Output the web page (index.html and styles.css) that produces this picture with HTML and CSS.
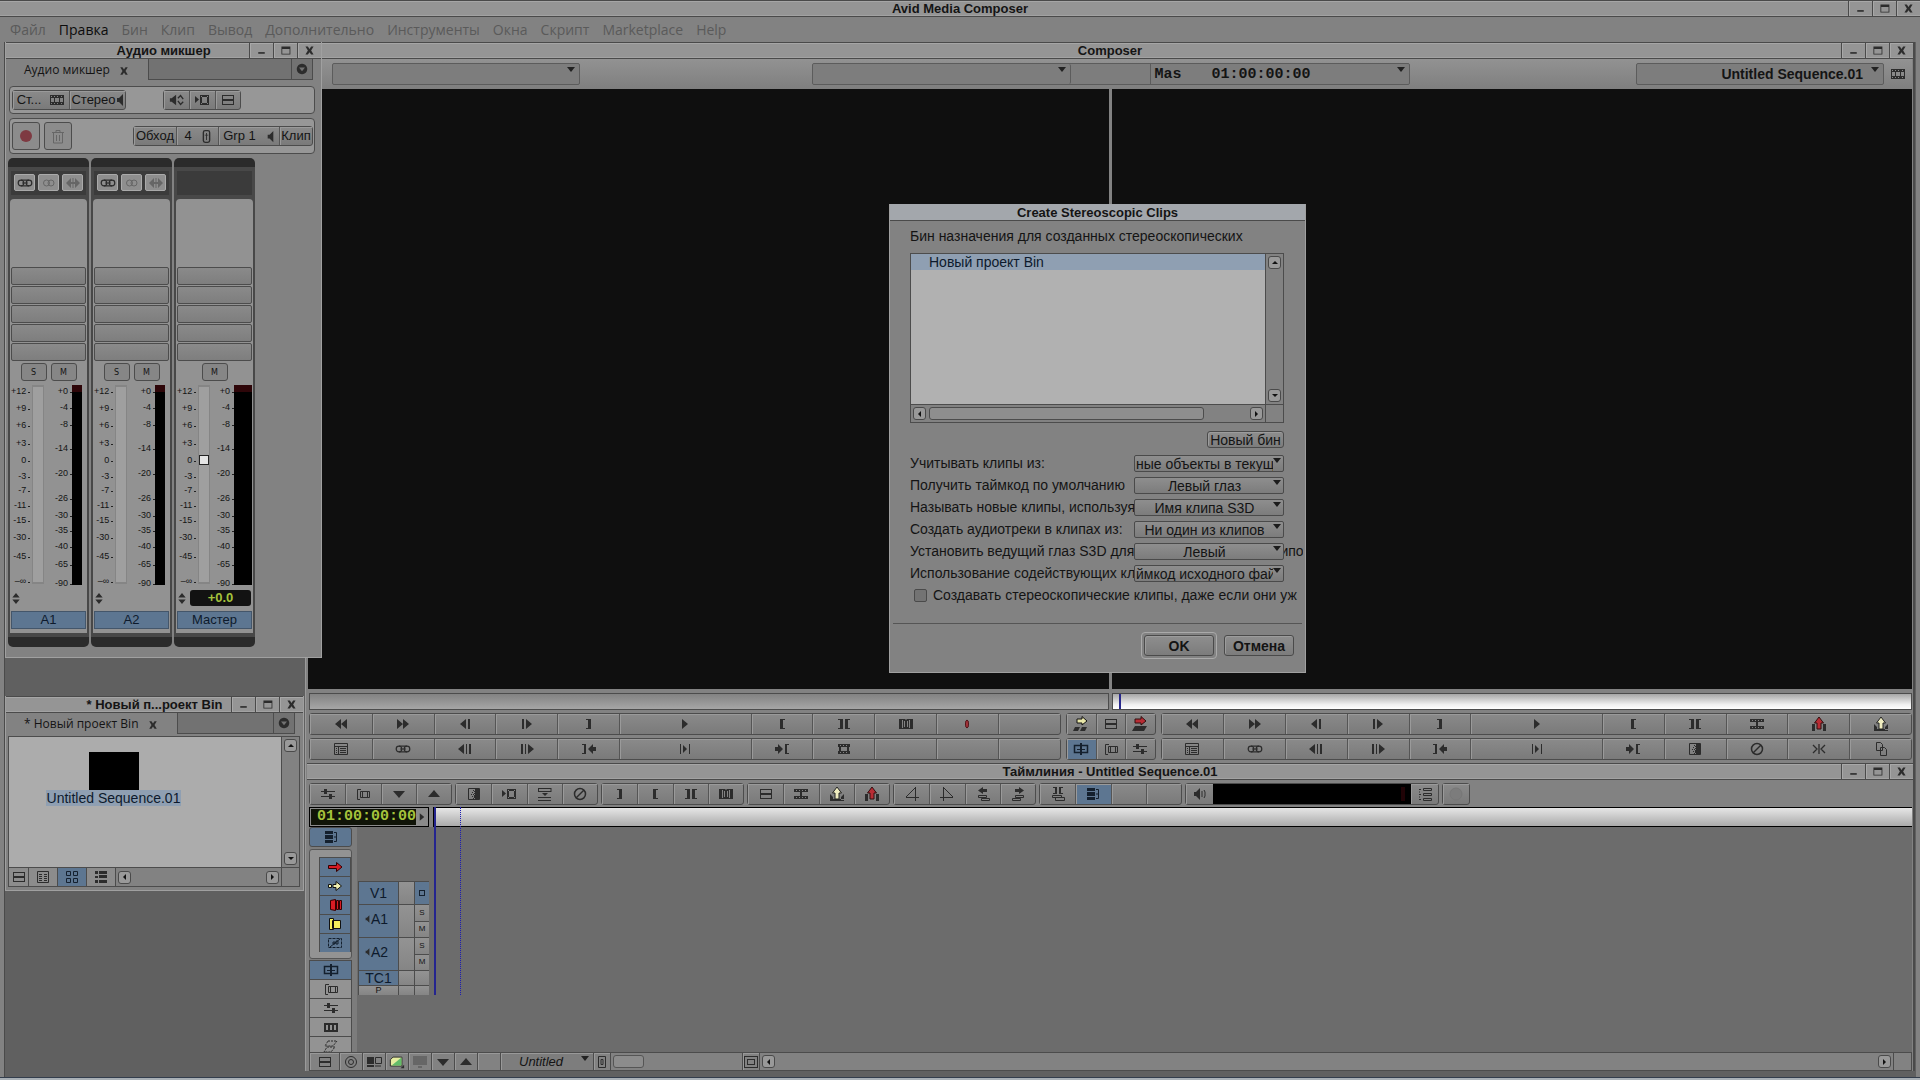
FILE: index.html
```html
<!DOCTYPE html>
<html lang="ru">
<head>
<meta charset="utf-8">
<title>Avid Media Composer</title>
<link rel="stylesheet" href="styles.css">
</head>
<body>

<svg class="sprite" aria-hidden="true">
  <symbol id="min" viewBox="0 0 16 16"><path d="M4 10h8v2H4z"/></symbol>
  <symbol id="max" viewBox="0 0 16 16"><path d="M3 3h11v10H3zM4 6v6h9V6z" fill-rule="evenodd"/></symbol>
  <symbol id="close" viewBox="0 0 16 16"><path d="M3 3h3l2 3 2-3h3L10 8l3 5h-3l-2-3-2 3H3l3-5z"/></symbol>
  <symbol id="rew" viewBox="0 0 16 16"><path d="M8 3v10L2 8zM14 3v10L8 8z"/></symbol>
  <symbol id="ff" viewBox="0 0 16 16"><path d="M2 3v10l6-5zM8 3v10l6-5z"/></symbol>
  <symbol id="back1" viewBox="0 0 16 16"><path d="M9 3v10L3 8zM11 3h2v10h-2z"/></symbol>
  <symbol id="fwd1" viewBox="0 0 16 16"><path d="M7 3v10l6-5zM3 3h2v10H3z"/></symbol>
  <symbol id="back10" viewBox="0 0 16 16"><path d="M7 3v10L1 8zM9 3h1v10H9zM12 3h2v10h-2z"/></symbol>
  <symbol id="fwd10" viewBox="0 0 16 16"><path d="M9 3v10l6-5zM2 3h2v10H2zM6 3h1v10H6z"/></symbol>
  <symbol id="out" viewBox="0 0 16 16"><path d="M5 3h5v10H5v-1h2V4H5z"/></symbol>
  <symbol id="in" viewBox="0 0 16 16"><path d="M6 3h5v1H9v8h2v1H6z"/></symbol>
  <symbol id="inout" viewBox="0 0 16 16"><path d="M2 3h5v10H2v-1h2V4H2zM9 3h5v1h-2v8h2v1H9z"/></symbol>
  <symbol id="selclip" viewBox="0 0 16 16"><path d="M1 3h14v10H1zM4 4v8h1V4zM11 4v8h1V4zM7.500 3v1h1V3zM6 5v6h1V5zM9 5v6h1V5z" fill-rule="evenodd"/></symbol>
  <symbol id="goout" viewBox="0 0 16 16"><path d="M1 3h4v10H1v-1h2V4H1zM7 8l5-5v3h3v4h-3v3z"/></symbol>
  <symbol id="goin" viewBox="0 0 16 16"><path d="M15 3h-4v10h4v-1h-2V4h2zM9 8L4 3v3H1v4h3v3z"/></symbol>
  <symbol id="play" viewBox="0 0 16 16"><path d="M5 3v10l6-5z"/></symbol>
  <symbol id="playio" viewBox="0 0 16 16"><path d="M3 3h1v10H3zM12 3h1v10h-1zM6 4v8l4-4z"/></symbol>
  <symbol id="marker" viewBox="0 0 16 16"><ellipse cx="8" cy="8" rx="1.500" ry="4" fill="#a8343c" stroke="#501418"/></symbol>
  <symbol id="cliplist" viewBox="0 0 16 16"><path d="M1.500 2.500h13v11h-13zM1 5.500h14M5.500 5v8M7 7.500h6M7 9.500h6M7 11.500h6M3 7.500h1M3 9.500h1M3 11.500h1" fill="none" stroke="currentColor"/></symbol>
  <symbol id="link" viewBox="0 0 16 16"><g fill="none" stroke="currentColor" stroke-width="1.200"><circle cx="4" cy="8" r="2.800"/><circle cx="12" cy="8" r="2.800"/><path d="M4 5.200h8M4 10.800h8M5 8h6"/></g></symbol>
  <symbol id="rings" viewBox="0 0 16 16"><g fill="none" stroke="currentColor"><circle cx="5.500" cy="8" r="3"/><circle cx="10" cy="8" r="3"/></g></symbol>
  <symbol id="leftright" viewBox="0 0 16 16"><path d="M1 8l5-5v4h4V3l5 5-5 5V9H6v4zM7.500 3h1v10h-1z"/></symbol>
  <symbol id="film" viewBox="0 0 16 16"><path d="M2 3h12v3h-1v4h1v3H2v-3h1V6H2zM5 6v4h6V6zM4 4v1h1V4zM7 4v1h1V4zM10 4v1h1V4zM4 11v1h1v-1zM7 11v1h1v-1zM10 11v1h1v-1z" fill-rule="evenodd"/></symbol>
  <symbol id="strip" viewBox="0 0 16 16"><path d="M1 3h14v10H1zM2 4v1h1V4zM5 4v1h1V4zM8 4v1h1V4zM12 4v1h1V4zM2 6v4h3V6zM6 6v4h4V6zM11 6v4h3V6zM2 11v1h1v-1zM5 11v1h1v-1zM8 11v1h1v-1zM12 11v1h1v-1z" fill-rule="evenodd"/></symbol>
  <symbol id="bars" viewBox="0 0 16 16"><path d="M2 3h12v10H2zM3 4v3h10V4zM3 9v3h10V9z" fill-rule="evenodd"/></symbol>
  <symbol id="extend" viewBox="0 0 16 16"><path d="M1 3h14v3H9v4h6v3H1v-3h6V6H1zM3 4v1h1V4zM6 4v1h1V4zM9 4v1h1V4zM12 4v1h1V4zM3 11v1h1v-1zM6 11v1h1v-1zM9 11v1h1v-1zM12 11v1h1v-1z" fill-rule="evenodd"/></symbol>
  <symbol id="splice" viewBox="0 0 16 16"><path d="M4 3h5V.500L14 5 9 9V7H4z" fill="#e8e6a8" stroke="#111"/><path d="M2 11h5l-2 4H0zM9 11h5l-2 4H7z"/></symbol>
  <symbol id="overwrite" viewBox="0 0 16 16"><path d="M3 3h6V.500L14 5 9 9V7H3z" fill="#b82c34" stroke="#301010"/><path d="M3 10h12l-3 5H0z"/></symbol>
  <symbol id="lift" viewBox="0 0 16 16"><path d="M6 13V7H3.500L8 1l4.500 6H10v6z" fill="#b82c34" stroke="#301010"/><path d="M1 8h3v7H1zM12 8h3v7h-3z"/></symbol>
  <symbol id="extract" viewBox="0 0 16 16"><path d="M1 8l3 3v3H1zM15 8l-3 3v3h3zM1 13h14v2H1z"/><path d="M6 13V7H3.500L8 1l4.500 6H10v6z" fill="#efedc0" stroke="#222"/></symbol>
  <symbol id="quick" viewBox="0 0 16 16"><path d="M2.500 2.500h11v11h-11z" fill="none" stroke="currentColor"/><path d="M9 3h4v10H9zM7 4h1v1H7zM6 6h1v1H6zM7 8h1v1H7zM6 10h1v1H6zM8 5h1v1H8zM8 9h1v3H8zM5 8h1v1H5zM7 12h1v1H7zM8 7h1v1H8z"/></symbol>
  <symbol id="noeffect" viewBox="0 0 16 16"><g fill="none" stroke="currentColor" stroke-width="1.500"><circle cx="8" cy="8" r="5.500"/><path d="M4 12L12 4"/></g></symbol>
  <symbol id="trimx" viewBox="0 0 16 16"><path d="M8 3v10M2 4l4 4-4 4M14 4l-4 4 4 4" fill="none" stroke="currentColor" stroke-width="1.300"/></symbol>
  <symbol id="pages" viewBox="0 0 16 16"><path d="M3.500 1.500h4l2 2v6h-6zM7.500 6.500h4l2 2v6h-6z" fill="none" stroke="currentColor"/></symbol>
  <symbol id="trim" viewBox="0 0 16 16"><path d="M1.500 4.500h13v7h-13z" fill="none" stroke="currentColor" stroke-width="1.500"/><path d="M7 2h2v12H7zM4 8h8v1H4z"/></symbol>
  <symbol id="segment" viewBox="0 0 16 16"><path d="M5.500 5.500h9v6h-9zM6 3.500H2.500v10H5M7.500 5v7M12.500 5v7" fill="none" stroke="currentColor"/></symbol>
  <symbol id="sliders" viewBox="0 0 16 16"><path d="M1 5.500h14M1 10.500h14" fill="none" stroke="currentColor"/><path d="M4 3h3v5H4zM9 8h3v5H9z"/></symbol>
  <symbol id="down" viewBox="0 0 16 16"><path d="M2 5h12L8 12z"/></symbol>
  <symbol id="up" viewBox="0 0 16 16"><path d="M2 11h12L8 4z"/></symbol>
  <symbol id="tofilm" viewBox="0 0 16 16"><path d="M1 4v7l4-3.500zM6 3h9v10H6zM8 5v6h5V5zM7 4v1h1V4zM13 4v1h1V4zM7 11v1h1v-1zM13 11v1h1v-1z" fill-rule="evenodd"/></symbol>
  <symbol id="intofilm" viewBox="0 0 16 16"><path d="M1 2.500h13M1 5.500h13M1.500 2v4M14 2v4M1 11.500h13M1 14.500h13" fill="none" stroke="currentColor"/><path d="M5 7h6l-3 3z"/></symbol>
  <symbol id="fadein" viewBox="0 0 16 16"><path d="M11.500 1v14M2 11.500h13M2 11L11 2" fill="none" stroke="currentColor"/></symbol>
  <symbol id="fadeout" viewBox="0 0 16 16"><path d="M4.500 1v14M1 11.500h13M5 2l9 9" fill="none" stroke="currentColor"/></symbol>
  <symbol id="stackl" viewBox="0 0 16 16"><path d="M8 1v2h4v3H8v2L3 4.500z"/><path d="M3.500 9.500h8v2h-8zM6.500 12.500h8v2h-8z" fill="none" stroke="currentColor"/></symbol>
  <symbol id="stackr" viewBox="0 0 16 16"><path d="M9 1v2H5v3h4v2l5-3.500z"/><path d="M5.500 9.500h8v2h-8zM2.500 12.500h8v2h-8z" fill="none" stroke="currentColor"/></symbol>
  <symbol id="stackio" viewBox="0 0 16 16"><path d="M3 1h4v7H3V7h2V2H3zM9 1h4v1h-2v5h2v1H9z"/><path d="M2.500 9.500h9v2h-9zM5.500 11.500h9v3h-9z" fill="none" stroke="currentColor"/></symbol>
  <symbol id="linksel" viewBox="0 0 16 16"><path d="M2 2h8v3H2zM2 6h8v4H2zM2 11h8v3H2z"/><path d="M11 3.500h2.500v9H11M11 8h3" fill="none" stroke="currentColor"/></symbol>
  <symbol id="speaker" viewBox="0 0 16 16"><path d="M2 6h2l4-4v12l-4-4H2z"/><path d="M10 5v6M12 4l1 2v4l-1 2" fill="none" stroke="currentColor"/></symbol>
  <symbol id="vol" viewBox="0 0 8 16"><path d="M1 6h2l4-4v12l-4-4H1z"/></symbol>
  <symbol id="meters" viewBox="0 0 16 16"><path d="M6.500 2.500h8v2h-8zM6.500 7.500h8v2h-8zM6.500 12.500h8v2h-8zM2 3.500h2M2 8.500h2M2 13.500h2M2 6h1M2 11h1" fill="none" stroke="currentColor"/></symbol>
  <symbol id="spkloop" viewBox="0 0 18 16"><path d="M1 6h2l5-4v12l-5-4H1z"/><path d="M10 6l3-3 3 4M16 10l-3 3-3-4" fill="none" stroke="currentColor" stroke-width="1.500"/></symbol>
  <symbol id="trash" viewBox="0 0 16 16"><path d="M2 4.500h12M6 4V2.500h4V4M3.500 5v10h9V5M6.500 7v6M9.500 7v6" fill="none" stroke="currentColor"/></symbol>
  <symbol id="knob" viewBox="0 0 10 16"><rect x="1.500" y="1.500" width="7" height="13" rx="2" fill="none" stroke="currentColor" stroke-width="1.500"/><path d="M4.500 4h1v8h-1zM3 6h4v1H3z"/></symbol>
  <symbol id="slot" viewBox="0 0 16 16"><path d="M4.500 2.500h7v11h-7zM7 5.500h2v5H7z" fill="none" stroke="currentColor"/></symbol>
  <symbol id="disc" viewBox="0 0 16 16"><circle cx="8" cy="8" r="6" fill="#7c7c7c" stroke="#777"/></symbol>
  <symbol id="rarrow" viewBox="0 0 16 16"><path d="M1.500 6.500h8v-3L15 8l-5.500 4.500v-3h-8z" fill="#d81c24" stroke="#300"/></symbol>
  <symbol id="yarrow" viewBox="0 0 16 16"><path d="M1.500 6.500h3v3h-3zM6 6.500h3v-3L14.500 8 9 12.500v-3H6z" fill="#f0f0b0" stroke="#111"/></symbol>
  <symbol id="rclip" viewBox="0 0 16 16"><path d="M3.500 3.500l5-1v11l-5-1zM9.500 3.500h2v9h-2zM12.500 3.500h2v9h-2z" fill="#d81c24" stroke="#300"/></symbol>
  <symbol id="yclip" viewBox="0 0 16 16"><path d="M2.500 2.500h4v11h-4zM5.500 4.500h8v8h-8z" fill="#f4f05c" stroke="#111"/></symbol>
  <symbol id="transsel" viewBox="0 0 16 16"><path d="M1.500 3.500h13v9h-13z" fill="none" stroke="currentColor" stroke-dasharray="3 1"/><path d="M3 12L13 4M6 7h2v2H6zM9 6h2v3H9z" fill="none" stroke="currentColor"/></symbol>
  <symbol id="cells" viewBox="0 0 16 16"><path d="M1 4h14v9H1zM3 6v5h2V6zM7 6v5h2V6zM11 6v5h2V6z" fill-rule="evenodd"/></symbol>
  <symbol id="razor" viewBox="0 0 16 16"><path d="M5 3h9l-4 5H2zM4 9h8l-4 5H1z" fill="none" stroke="currentColor" stroke-dasharray="2 1"/></symbol>
  <symbol id="target" viewBox="0 0 16 16"><g fill="none" stroke="currentColor"><circle cx="8" cy="8" r="5.500"/><circle cx="8" cy="8" r="2.500"/></g></symbol>
  <symbol id="srcrec" viewBox="0 0 16 16"><path d="M1 3h7v7H1zM1 11h7v2H1z"/><path d="M9.500 3.500h6v6h-6zM9 12h6" fill="none" stroke="currentColor"/></symbol>
  <symbol id="green" viewBox="0 0 18 16"><path d="M1.500 12.500v-7l3-3h10v10z" fill="#e6eda0" stroke="#222"/><path d="M14 3v9H3z" fill="#63bd6a"/><path d="M17 11v4h-4z"/></symbol>
  <symbol id="monitor" viewBox="0 0 16 16"><path d="M1 2h14v9H1zM6 12h4v2H6z"/></symbol>
  <symbol id="boxin" viewBox="0 0 16 16"><path d="M1 2h14v12H1zM2 3v10h12V3zM4 5h8v6H4zM5 6v4h6V6z" fill-rule="evenodd"/></symbol>
  <symbol id="text" viewBox="0 0 16 16"><path d="M2.500 2.500h11v11h-11zM4 5.500h3M9 5.500h3M4 7.500h3M9 7.500h3M4 9.500h3M9 9.500h3M4 11.500h3M9 11.500h3" fill="none" stroke="currentColor"/></symbol>
  <symbol id="frames" viewBox="0 0 16 16"><path d="M2.500 2.500h4v4h-4zM9.500 2.500h4v4h-4zM2.500 9.500h4v4h-4zM9.500 9.500h4v4h-4z" fill="none" stroke="currentColor"/></symbol>
  <symbol id="script" viewBox="0 0 16 16"><path d="M2 2h3v3H2zM6 2h8v3H6zM2 7h3v2H2zM6 6h8v3H6zM2 11h3v3H2zM6 11h8v3H6z"/></symbol>
  <symbol id="menudot" viewBox="0 0 16 16"><path d="M8 1a7 7 0 1 0 .01 0zM4 6h8l-4 5z" fill-rule="evenodd"/></symbol>
  <symbol id="spin" viewBox="0 0 8 12"><path d="M0 5l4-5 4 5zM0 7h8l-4 5z"/></symbol>
</svg>

<header class="titlebar">
  <h1>Avid Media Composer</h1>
  <div class="winbtns">
    <button aria-label="Свернуть"><svg><use href="#min"/></svg></button>
    <button aria-label="Развернуть"><svg><use href="#max"/></svg></button>
    <button aria-label="Закрыть"><svg><use href="#close"/></svg></button>
  </div>
</header>

<nav class="menu">
  <a href="#">Файл</a>
  <a href="#" class="on">Правка</a>
  <a href="#">Бин</a>
  <a href="#">Клип</a>
  <a href="#">Вывод</a>
  <a href="#">Дополнительно</a>
  <a href="#">Инструменты</a>
  <a href="#">Окна</a>
  <a href="#">Скрипт</a>
  <a href="#">Marketplace</a>
  <a href="#">Help</a>
</nav>

<main class="desk">

<div class="right">

<!-- Composer -->
<section class="composer">
  <div class="titlebar">
    <h2>Composer</h2>
    <div class="winbtns">
      <button aria-label="Свернуть"><svg><use href="#min"/></svg></button>
      <button aria-label="Развернуть"><svg><use href="#max"/></svg></button>
      <button aria-label="Закрыть"><svg><use href="#close"/></svg></button>
    </div>
  </div>
  <div class="infobar">
    <button class="combo source" aria-label="Источник"></button>
    <div class="timeinfo">
      <button class="combo" aria-label="Дорожка"></button>
      <span></span>
      <button class="combo tc"><span>Mas</span><span>01:00:00:00</span></button>
    </div>
    <div class="record">
      <button class="combo seq">Untitled Sequence.01</button>
      <svg><use href="#strip"/></svg>
    </div>
  </div>
  <div class="monitors"><div></div><div></div></div>
  <div class="posbars"><div class="pos"></div><div class="pos rec"><i></i></div></div>
  <div class="transport">
    <div class="keys">
      <button><svg><use href="#rew"/></svg></button>
      <button><svg><use href="#ff"/></svg></button>
      <button><svg><use href="#back1"/></svg></button>
      <button><svg><use href="#fwd1"/></svg></button>
      <button><svg><use href="#out"/></svg></button>
      <button><svg><use href="#play"/></svg></button>
      <button><svg><use href="#in"/></svg></button>
      <button><svg><use href="#inout"/></svg></button>
      <button><svg><use href="#selclip"/></svg></button>
      <button><svg><use href="#marker"/></svg></button>
      <button></button>
    </div>
    <div class="keys mid">
      <button><svg><use href="#splice"/></svg></button>
      <button><svg><use href="#bars"/></svg></button>
      <button><svg><use href="#overwrite"/></svg></button>
    </div>
    <div class="keys">
      <button><svg><use href="#rew"/></svg></button>
      <button><svg><use href="#ff"/></svg></button>
      <button><svg><use href="#back1"/></svg></button>
      <button><svg><use href="#fwd1"/></svg></button>
      <button><svg><use href="#out"/></svg></button>
      <button><svg><use href="#play"/></svg></button>
      <button><svg><use href="#in"/></svg></button>
      <button><svg><use href="#inout"/></svg></button>
      <button><svg><use href="#extend"/></svg></button>
      <button><svg><use href="#lift"/></svg></button>
      <button><svg><use href="#extract"/></svg></button>
    </div>
    <div class="keys">
      <button><svg><use href="#cliplist"/></svg></button>
      <button><svg><use href="#link"/></svg></button>
      <button><svg><use href="#back10"/></svg></button>
      <button><svg><use href="#fwd10"/></svg></button>
      <button><svg><use href="#goout"/></svg></button>
      <button><svg><use href="#playio"/></svg></button>
      <button><svg><use href="#goin"/></svg></button>
      <button><svg><use href="#film"/></svg></button>
      <button></button>
      <button></button>
      <button></button>
    </div>
    <div class="keys mid">
      <button class="blue"><svg><use href="#trim"/></svg></button>
      <button><svg><use href="#segment"/></svg></button>
      <button><svg><use href="#sliders"/></svg></button>
    </div>
    <div class="keys">
      <button><svg><use href="#cliplist"/></svg></button>
      <button><svg><use href="#link"/></svg></button>
      <button><svg><use href="#back10"/></svg></button>
      <button><svg><use href="#fwd10"/></svg></button>
      <button><svg><use href="#goout"/></svg></button>
      <button><svg><use href="#playio"/></svg></button>
      <button><svg><use href="#goin"/></svg></button>
      <button><svg><use href="#quick"/></svg></button>
      <button><svg><use href="#noeffect"/></svg></button>
      <button><svg><use href="#trimx"/></svg></button>
      <button><svg><use href="#pages"/></svg></button>
    </div>
  </div>
</section>

<!-- Timeline -->
<section class="timeline">
  <div class="titlebar">
    <h2>Таймлиния - Untitled Sequence.01</h2>
    <div class="winbtns">
      <button aria-label="Свернуть"><svg><use href="#min"/></svg></button>
      <button aria-label="Развернуть"><svg><use href="#max"/></svg></button>
      <button aria-label="Закрыть"><svg><use href="#close"/></svg></button>
    </div>
  </div>
  <div class="tools">
    <div class="keys">
      <button><svg><use href="#sliders"/></svg></button>
      <button><svg><use href="#segment"/></svg></button>
      <button><svg><use href="#down"/></svg></button>
      <button><svg><use href="#up"/></svg></button>
    </div>
    <div class="keys">
      <button><svg><use href="#quick"/></svg></button>
      <button><svg><use href="#tofilm"/></svg></button>
      <button><svg><use href="#intofilm"/></svg></button>
      <button><svg><use href="#noeffect"/></svg></button>
    </div>
    <div class="keys">
      <button><svg><use href="#out"/></svg></button>
      <button><svg><use href="#in"/></svg></button>
      <button><svg><use href="#inout"/></svg></button>
      <button><svg><use href="#selclip"/></svg></button>
    </div>
    <div class="keys">
      <button><svg><use href="#bars"/></svg></button>
      <button><svg><use href="#extend"/></svg></button>
      <button><svg><use href="#extract"/></svg></button>
      <button><svg><use href="#lift"/></svg></button>
    </div>
    <div class="keys">
      <button><svg><use href="#fadein"/></svg></button>
      <button><svg><use href="#fadeout"/></svg></button>
      <button><svg><use href="#stackl"/></svg></button>
      <button><svg><use href="#stackr"/></svg></button>
    </div>
    <div class="keys">
      <button><svg><use href="#stackio"/></svg></button>
      <button class="blue"><svg><use href="#linksel"/></svg></button>
      <button></button>
      <button></button>
    </div>
    <div class="keys audio">
      <button><svg><use href="#speaker"/></svg></button>
      <div class="level"><i></i></div>
      <button><svg><use href="#meters"/></svg></button>
    </div>
    <div class="keys one"><button><svg><use href="#disc"/></svg></button></div>
  </div>

  <div class="ruler">
    <div class="tcbox"><span>01:00:00:00</span><svg><use href="#play"/></svg></div>
    <div class="scale"></div>
  </div>

  <div class="tracks">
    <div class="palette">
      <button class="blue top"><svg><use href="#linksel"/></svg></button>
      <div class="smart">
        <button class="blue"><svg><use href="#rarrow"/></svg></button>
        <button class="blue"><svg><use href="#yarrow"/></svg></button>
        <button class="blue"><svg><use href="#rclip"/></svg></button>
        <button class="blue"><svg><use href="#yclip"/></svg></button>
        <button class="blue"><svg><use href="#transsel"/></svg></button>
      </div>
      <button class="blue"><svg><use href="#trim"/></svg></button>
      <button><svg><use href="#segment"/></svg></button>
      <button><svg><use href="#sliders"/></svg></button>
      <button><svg><use href="#cells"/></svg></button>
      <button><svg><use href="#razor"/></svg></button>
    </div>
    <div class="heads">
      <button class="name v">V1</button><button class="v"></button><button class="v blue"><i class="mon"></i></button>
      <button class="name a"><svg><use href="#vol"/></svg>A1</button><button class="a"></button><div class="sm a"><button>S</button><button>M</button></div>
      <button class="name a"><svg><use href="#vol"/></svg>A2</button><button class="a"></button><div class="sm a"><button>S</button><button>M</button></div>
      <button class="name t">TC1</button><button class="t"></button><button class="t"></button>
      <button class="p">P</button><button class="p"></button><button class="p"></button>
    </div>
    <div class="canvas"><i class="playhead"></i><i class="playend"></i></div>
  </div>

  <div class="tlfoot">
    <button class="wide"><svg><use href="#bars"/></svg></button>
    <button><svg><use href="#target"/></svg></button>
    <button><svg><use href="#srcrec"/></svg></button>
    <button><svg><use href="#green"/></svg></button>
    <button class="dim"><svg><use href="#monitor"/></svg></button>
    <button><svg><use href="#down"/></svg></button>
    <button><svg><use href="#up"/></svg></button>
    <button></button>
    <button class="combo view">Untitled</button>
    <button class="slim"><svg><use href="#slot"/></svg></button>
    <div class="zoomer"><i></i></div>
    <button class="slim"><svg><use href="#boxin"/></svg></button>
    <div class="hscroll"><button class="arr left" aria-label="Влево"></button><button class="arr rt" aria-label="Вправо"></button></div>
    <span class="grip"></span>
  </div>
</section>
</div>

<!-- Audio mixer -->
<section class="win mixer">
  <div class="titlebar">
    <h2>Аудио микшер</h2>
    <div class="winbtns">
      <button aria-label="Свернуть"><svg><use href="#min"/></svg></button>
      <button aria-label="Развернуть"><svg><use href="#max"/></svg></button>
      <button aria-label="Закрыть"><svg><use href="#close"/></svg></button>
    </div>
  </div>
  <div class="tabs">
    <div class="tab">Аудио микшер <svg><use href="#close"/></svg></div>
    <div class="rest"><button aria-label="Меню"><svg><use href="#menudot"/></svg></button></div>
  </div>
  <div class="panel p1">
    <div class="keys">
      <button class="ct">Ст...<svg><use href="#strip"/></svg></button>
      <button class="st"><span>Стерео</span><svg><use href="#vol"/></svg></button>
    </div>
    <div class="keys three">
      <button><svg><use href="#spkloop"/></svg></button>
      <button><svg><use href="#tofilm"/></svg></button>
      <button><svg><use href="#bars"/></svg></button>
    </div>
  </div>
  <div class="panel p2">
    <button class="sq" aria-label="Запись"><i class="dot"></i></button>
    <button class="sq dim" aria-label="Удалить"><svg><use href="#trash"/></svg></button>
    <div class="keys">
      <button>Обход</button>
      <button>4<svg class="kn"><use href="#knob"/></svg></button>
      <button>Grp 1<svg class="kn"><use href="#vol"/></svg></button>
      <button>Клип</button>
    </div>
  </div>
  <div class="channels">
    <div class="ch">
      <div class="chhead"><button><svg><use href="#link"/></svg></button><button class="dim"><svg><use href="#rings"/></svg></button><button class="dim"><svg><use href="#leftright"/></svg></button></div>
      <div class="chbody">
        <div class="slots"><button></button><button></button><button></button><button></button><button></button></div>
        <div class="sm"><button>S</button><button>M</button></div>
        <div class="fader">
          <ol class="gain"><li>+12</li><li>+9</li><li>+6</li><li>+3</li><li>0</li><li>-3</li><li>-7</li><li>-11</li><li>-15</li><li>-30</li><li>-45</li><li>–∞</li></ol>
          <div class="groove"></div>
          <ol class="db"><li>+0</li><li>-4</li><li>-8</li><li>-14</li><li>-20</li><li>-26</li><li>-30</li><li>-35</li><li>-40</li><li>-65</li><li>-90</li></ol>
          <div class="meter"></div>
        </div>
        <div class="val"><svg><use href="#spin"/></svg></div>
        <button class="chname">A1</button>
      </div>
    </div>
    <div class="ch">
      <div class="chhead"><button><svg><use href="#link"/></svg></button><button class="dim"><svg><use href="#rings"/></svg></button><button class="dim"><svg><use href="#leftright"/></svg></button></div>
      <div class="chbody">
        <div class="slots"><button></button><button></button><button></button><button></button><button></button></div>
        <div class="sm"><button>S</button><button>M</button></div>
        <div class="fader">
          <ol class="gain"><li>+12</li><li>+9</li><li>+6</li><li>+3</li><li>0</li><li>-3</li><li>-7</li><li>-11</li><li>-15</li><li>-30</li><li>-45</li><li>–∞</li></ol>
          <div class="groove"></div>
          <ol class="db"><li>+0</li><li>-4</li><li>-8</li><li>-14</li><li>-20</li><li>-26</li><li>-30</li><li>-35</li><li>-40</li><li>-65</li><li>-90</li></ol>
          <div class="meter"></div>
        </div>
        <div class="val"><svg><use href="#spin"/></svg></div>
        <button class="chname">A2</button>
      </div>
    </div>
    <div class="ch master">
      <div class="chhead"></div>
      <div class="chbody">
        <div class="slots"><button></button><button></button><button></button><button></button><button></button></div>
        <div class="sm"><button>M</button></div>
        <div class="fader">
          <ol class="gain"><li>+12</li><li>+9</li><li>+6</li><li>+3</li><li>0</li><li>-3</li><li>-7</li><li>-11</li><li>-15</li><li>-30</li><li>-45</li><li>–∞</li></ol>
          <input class="groove" type="range" min="0" max="100" value="63" aria-label="Громкость">
          <ol class="db"><li>+0</li><li>-4</li><li>-8</li><li>-14</li><li>-20</li><li>-26</li><li>-30</li><li>-35</li><li>-40</li><li>-65</li><li>-90</li></ol>
          <div class="meter"></div>
        </div>
        <div class="val"><svg><use href="#spin"/></svg><output>+0.0</output></div>
        <button class="chname">Мастер</button>
      </div>
    </div>
  </div>
</section>

<!-- Bin -->
<section class="win bin">
  <div class="titlebar">
    <h2>* Новый п...роект Bin</h2>
    <div class="winbtns">
      <button aria-label="Свернуть"><svg><use href="#min"/></svg></button>
      <button aria-label="Развернуть"><svg><use href="#max"/></svg></button>
      <button aria-label="Закрыть"><svg><use href="#close"/></svg></button>
    </div>
  </div>
  <div class="tabs">
    <div class="tab">* Новый проект Bin <svg><use href="#close"/></svg></div>
    <div class="rest"><button aria-label="Меню"><svg><use href="#menudot"/></svg></button></div>
  </div>
  <div class="binbox">
    <div class="items">
      <figure><div class="thumb"></div><figcaption>Untitled Sequence.01</figcaption></figure>
    </div>
    <div class="vscroll"><button class="arr upp" aria-label="Вверх"></button><button class="arr dn" aria-label="Вниз"></button></div>
    <div class="binfoot">
      <button class="narrow"><svg><use href="#bars"/></svg></button>
      <button><svg><use href="#text"/></svg></button>
      <button class="blue"><svg><use href="#frames"/></svg></button>
      <button><svg><use href="#script"/></svg></button>
      <div class="hscroll"><button class="arr left" aria-label="Влево"></button><button class="arr rt" aria-label="Вправо"></button></div>
    </div>
    <span class="grip"></span>
  </div>
</section>

<!-- Dialog -->
<form class="win dialog" onsubmit="return false">
  <h2>Create Stereoscopic Clips</h2>
  <div class="content">
    <p>Бин назначения для созданных стереоскопических</p>
    <div class="listbox">
      <ul><li>Новый проект Bin</li></ul>
      <div class="vscroll"><button type="button" class="arr upp" aria-label="Вверх"></button><button type="button" class="arr dn" aria-label="Вниз"></button></div>
      <div class="hscroll"><button type="button" class="arr left" aria-label="Влево"></button><i class="thumbbar"></i><button type="button" class="arr rt" aria-label="Вправо"></button></div>
      <span class="corner"></span>
    </div>
    <button type="button" class="btn newbin">Новый бин</button>
    <div class="row"><label for="s1">Учитывать клипы из:</label><span class="sel"><select id="s1"><option>ные объекты в текущ</option></select></span></div>
    <div class="row"><label for="s2">Получить таймкод по умолчанию</label><span class="sel"><select id="s2"><option>Левый глаз</option></select></span></div>
    <div class="row"><label for="s3">Называть новые клипы, используя</label><span class="sel"><select id="s3"><option>Имя клипа S3D</option></select></span></div>
    <div class="row"><label for="s4">Создать аудиотреки в клипах из:</label><span class="sel"><select id="s4"><option>Ни один из клипов</option></select></span></div>
    <div class="row"><label for="s5">Установить ведущий глаз S3D для стереоскопических клипов</label><span class="sel"><select id="s5"><option>Левый</option></select></span></div>
    <div class="row"><label for="s6">Использование содействующих клипов</label><span class="sel"><select id="s6"><option>ймкод исходного фай</option></select></span></div>
    <div class="check"><input type="checkbox" id="force"><label for="force">Создавать стереоскопические клипы, даже если они уж</label></div>
  </div>
  <div class="actions">
    <span class="default"><button type="submit" class="btn">OK</button></span>
    <button type="button" class="btn">Отмена</button>
  </div>
</form>

</main>
<footer class="edge"></footer>
</body>
</html>
```
FILE: styles.css
```css
* {
  box-sizing: border-box;
}

body {
  margin: 0;
  height: 100vh;
  display: flex;
  flex-direction: column;
  overflow: hidden;
  background: #828282;
  color: #141414;
  font-family: "Liberation Sans", Arial, sans-serif;
  font-size: 13px;
  line-height: 16px;
}

h1, h2, p, ol, ul, figure {
  margin: 0;
  padding: 0;
  list-style: none;
}

h1, h2 {
  font-size: 13px;
  line-height: 16px;
  font-weight: bold;
  white-space: nowrap;
}

button, select, input {
  font: inherit;
  color: inherit;
  margin: 0;
  padding: 0;
  border: 0;
  border-radius: 0;
  background: none;
  white-space: nowrap;
}

svg {
  width: 16px;
  height: 16px;
  flex: none;
  fill: currentColor;
  color: #2c2c2c;
}

.sprite {
  position: absolute;
  width: 0;
  height: 0;
}

/* title bars */
.titlebar {
  display: grid;
  grid-template-columns: 1fr auto 1fr;
  height: 17px;
  flex: none;
  border: 1px solid #4a4a4a;
  border-width: 1px 0;
  background: #959595;
  box-shadow: inset 0 1px #a6a6a6, inset 0 -1px #a2a2a2;
}

.titlebar h1, .titlebar h2 {
  grid-column: 2;
}

.winbtns {
  display: flex;
  justify-content: flex-end;
}

.winbtns button {
  width: 24px;
  height: 15px;
  border-left: 1px solid #4a4a4a;
  box-shadow: inset 1px 1px #a8a8a8;
  display: flex;
  align-items: center;
  justify-content: center;
}

.winbtns svg {
  width: 13px;
  height: 13px;
}

.menu {
  display: flex;
  gap: 13px;
  flex: none;
  height: 25px;
  padding-left: 10px;
  font: 14px/25px "Open Sans", "Noto Sans", sans-serif;
}

.menu a {
  color: #5a5a5a;
  text-decoration: none;
}

.menu a.on {
  color: #0c0c0c;
}

.desk {
  position: relative;
  flex: 1;
  min-height: 0;
  margin: 0 4px;
  border-left: 1px solid #4a4a4a;
  background: #606060;
  display: flex;
}

.right {
  flex: 1;
  margin: 0 1px 6px 300px;
  padding: 0 1px 0 3px;
  border-left: 1px solid #9a9a9a;
  border-right: 2px solid #4a4a4a;
  background: #828282;
  display: flex;
  flex-direction: column;
  min-width: 0;
}

.right .titlebar {
  margin: 0 -1px 0 -2px;
}

.edge {
  height: 3px;
  flex: none;
  background: #a9b0b6;
  border-top: 1px solid #333d4c;
}

/* shared buttons */
.keys {
  display: grid;
  height: 22px;
  border: 1px solid #4c4c4c;
  border-radius: 3px;
  background: linear-gradient(#8a8a8a, #7a7a7a);
}

.keys button {
  display: flex;
  align-items: center;
  justify-content: center;
  min-width: 0;
  box-shadow: inset 1px 1px #9a9a9a;
}

.keys button + button {
  border-left: 1px solid #555;
}

.blue, .keys .blue {
  background: #5d7691;
  color: #0d1a2c;
}

.blue svg {
  color: #14202e;
}

.dim svg {
  color: #666;
}

.combo {
  border: 1px solid #5c5c5c;
  border-radius: 2px;
  background: #7d7d7d;
  height: 22px;
  display: flex;
  align-items: center;
}

.combo::after {
  content: "";
  margin-left: auto;
  align-self: flex-start;
  border: 4px solid transparent;
  border-top: 5px solid #222;
  border-bottom: 0;
  margin-top: 3px;
  margin-right: 4px;
}

/* composer */
.composer {
  flex: 721;
  min-height: 0;
  display: flex;
  flex-direction: column;
}

.infobar {
  display: flex;
  justify-content: space-between;
  align-items: flex-start;
  height: 30px;
  flex: none;
  padding: 4px 6px 0 23px;
  background: linear-gradient(#929292, #7f7f7f);
}

.infobar .source, .infobar .seq {
  width: 248px;
}

.timeinfo {
  display: flex;
  width: 598px;
  height: 22px;
  margin-left: 5px;
  border: 1px solid #5c5c5c;
  border-radius: 2px;
  background: #7d7d7d;
}

.timeinfo .combo {
  border: 0;
  height: 20px;
  width: 258px;
  border-right: 1px solid #5c5c5c;
}

.timeinfo > span {
  width: 80px;
  border-right: 1px solid #5c5c5c;
}

.timeinfo .tc {
  flex: 1;
  border: 0;
  gap: 30px;
  padding-left: 4px;
  font: bold 15px "Liberation Mono", monospace;
}

.record {
  display: flex;
  align-items: center;
  gap: 6px;
}

.infobar .seq {
  justify-content: flex-end;
  font-weight: bold;
  font-size: 14px;
}

.infobar .seq::after {
  margin-left: 8px;
}

.monitors {
  flex: 1;
  display: grid;
  grid-template-columns: 1fr 1fr;
  gap: 3px;
  margin: 0 0 4px -1px;
}

.monitors div {
  background: #0f0f0f;
}

.posbars {
  display: grid;
  grid-template-columns: 1fr 1fr;
  gap: 3px;
  height: 17px;
  margin-bottom: 3px;
}

.pos {
  border: 1px solid #4c4c4c;
  background: linear-gradient(#828282, #a6a6a6);
}

.rec {
  background: linear-gradient(#a6a6a6, #f0f0f0 70%, #fff);
}

.rec i {
  display: block;
  width: 2px;
  height: 100%;
  margin-left: 6px;
  background: #28288c;
}

.transport {
  display: grid;
  grid-template-columns: 1fr 90px 1fr;
  gap: 3px 5px;
  padding-bottom: 3px;
}

.transport .keys {
  grid-template-columns: repeat(5, 62fr) 132fr repeat(5, 62fr);
}

.transport .mid {
  grid-template-columns: repeat(3, 1fr);
}

/* timeline */
.timeline {
  flex: 308;
  min-height: 0;
  display: flex;
  flex-direction: column;
}

.tools {
  display: flex;
  gap: 3px;
  padding: 3px 0 2px;
}

.tools .keys {
  width: 143px;
  grid-template-columns: repeat(4, 1fr);
}

.tools .audio {
  width: 254px;
  grid-template-columns: 27px 1fr 27px;
}

.tools .one {
  width: 28px;
  grid-template-columns: 1fr;
}

.level {
  background: #000;
}

.level i {
  display: block;
  width: 4px;
  height: 14px;
  margin: 3px 6px 0 auto;
  background: #200306;
}

.ruler {
  display: flex;
  gap: 4px;
  height: 20px;
  flex: none;
}

.tcbox {
  width: 120px;
  border: 1px solid #000;
  background: #8a8a8a;
  display: flex;
  align-items: center;
  padding: 1px;
}

.tcbox span {
  width: 106px;
  background: #101408;
  color: #a5c23c;
  font: bold 15px/16px "Liberation Mono", monospace;
  padding-left: 6px;
}

.tcbox svg {
  width: 12px;
}

.scale {
  flex: 1;
  border: 1px solid #000;
  border-right: 0;
  background: linear-gradient(#e6e6e6, #aaa);
}

.tracks {
  flex: 1;
  min-height: 0;
  display: flex;
  background: #6c6c6c;
}

.palette {
  width: 48px;
  padding-right: 5px;
  background: #7c7c7c;
  overflow: hidden;
  display: flex;
  flex-direction: column;
}

.palette button {
  flex: none;
  height: 19px;
  border: 1px solid #4c4c4c;
  border-bottom-width: 0;
  display: flex;
  align-items: center;
  justify-content: center;
  background-color: #939393;
}

.palette .blue {
  background-color: #5d7691;
}

.palette .top {
  height: 20px;
  border-bottom-width: 1px;
  border-radius: 3px;
}

.smart {
  flex: none;
  margin: 2px 0 1px;
  padding: 7px 0 6px 9px;
  border: 1px solid #555;
  border-radius: 3px;
  background: #939393;
}

.smart button {
  width: 32px;
}

.heads {
  display: grid;
  grid-template-columns: 40px 16px 15px;
  align-content: start;
  width: 72px;
  margin: 54px 0 0 1px;
}

.heads button {
  border: 1px solid #4c4c4c;
  border-width: 1px 0 0 1px;
  background: linear-gradient(#939393, #858585);
  display: flex;
  align-items: center;
  justify-content: center;
}

.heads .name, .heads .blue {
  background: #5d7691;
  color: #0d1a2c;
}

.heads .name {
  font-size: 14px;
  line-height: 14px;
}

.heads .name.a {
  justify-content: flex-start;
  padding: 0 0 4px 5px;
}

.heads .name svg {
  width: 7px;
  height: 10px;
}

.heads .v { height: 23px; }
.heads .a { height: 33px; }
.heads .t { height: 15px; }
.heads .p { height: 10px; font-size: 9px; line-height: 9px; }

.heads .sm button {
  width: 100%;
  height: 50%;
  font-size: 8px;
}

.mon {
  width: 6px;
  height: 6px;
  border: 1px solid #14202e;
}

.canvas {
  position: relative;
  flex: 1;
}

/* cursor lines run over the ruler and the tracks */
.playhead, .playend {
  position: absolute;
  top: -20px;
  left: 4px;
  height: 188px;
  border-left: 2px solid #25258f;
}

.playend {
  left: 30px;
  border-left: 1px dotted #1c1cb4;
}

.tlfoot {
  display: flex;
  height: 19px;
  flex: none;
  border: 1px solid #4c4c4c;
}

.tlfoot > button {
  width: 23px;
  border-right: 1px solid #4c4c4c;
  box-shadow: inset 1px 1px #999;
  display: flex;
  align-items: center;
  justify-content: center;
}

.tlfoot > .wide {
  width: 30px;
}

.tlfoot > .slim {
  width: 17px;
}

.tlfoot .view {
  width: 93px;
  height: auto;
  border-width: 0 1px 0 0;
  border-radius: 0;
  justify-content: flex-start;
  padding-left: 18px;
  font-style: italic;
}

.zoomer {
  width: 132px;
  border-right: 1px solid #4c4c4c;
  padding: 2px;
}

.zoomer i {
  display: block;
  width: 31px;
  height: 13px;
  border: 1px solid #555;
  border-radius: 3px;
  background: #8c8c8c;
}

.grip {
  width: 18px;
  border-left: 1px solid #4c4c4c;
}

/* scroll bars */
.hscroll {
  flex: 1;
  display: flex;
  justify-content: space-between;
  align-items: center;
  padding: 0 2px;
}

.vscroll {
  display: flex;
  flex-direction: column;
  justify-content: space-between;
  align-items: center;
  padding: 2px 0;
}

.arr {
  width: 13px;
  height: 13px;
  flex: none;
  border: 1px solid #4a4a4a;
  border-radius: 3px;
  background: #999;
  display: flex;
  align-items: center;
  justify-content: center;
}

.arr::before {
  content: "";
  border: 3px solid transparent;
}

.upp::before { border-bottom: 3px solid #111; border-top: 0; }
.dn::before { border-top: 3px solid #111; border-bottom: 0; }
.left::before { border-right: 3px solid #111; border-left: 0; }
.rt::before { border-left: 3px solid #111; border-right: 0; }

/* floating windows */
.win {
  position: absolute;
  background: #828282;
  border: 1px solid #a0a0a0;
  border-width: 0 1px 1px;
}

.tabs {
  display: flex;
  height: 21px;
}

.tab {
  padding: 3px 0 0 18px;
  font: 12px/16px "Open Sans", "Noto Sans", sans-serif;
  white-space: nowrap;
}

.tab svg {
  width: 12px;
  height: 12px;
  margin-left: 5px;
  vertical-align: -3px;
}

.rest {
  flex: 1;
  display: flex;
  justify-content: flex-end;
  margin: 0 8px 0 18px;
  border: 1px solid #4c4c4c;
  border-top: 0;
  background: #727272;
}

.rest button {
  width: 21px;
  border-left: 1px solid #4c4c4c;
  display: flex;
  align-items: center;
  justify-content: center;
}

.rest svg {
  width: 12px;
  height: 12px;
}

.mixer {
  left: 0;
  top: 0;
  width: 317px;
  padding-bottom: 10px;
}

.panel {
  display: flex;
  align-items: center;
  margin: 0 6px 0 3px;
  padding: 0 2px;
  border: 1px solid #4c4c4c;
  border-radius: 4px;
  background: #979797;
}

.panel .keys {
  height: 20px;
}

.panel .keys button {
  font-size: 13px;
}

.p1 {
  height: 28px;
  margin-top: 6px;
}

.p1 .keys {
  width: 114px;
  grid-template-columns: 56px 1fr;
}

.p1 .ct {
  gap: 8px;
}

.p1 .st svg {
  width: 8px;
}

.p1 .three {
  width: 78px;
  grid-template-columns: repeat(3, 1fr);
  margin-left: 37px;
}

.p2 {
  height: 36px;
  margin-top: 4px;
  padding-right: 1px;
}

.p2 .keys {
  margin-left: auto;
  width: 180px;
  grid-template-columns: 42px 42px 61px 1fr;
}

.p2 .keys button {
  gap: 10px;
}

.kn {
  width: 9px;
  height: 15px;
}

.sq {
  width: 28px;
  height: 28px;
  margin-right: 4px;
  border: 1px solid #4c4c4c;
  border-radius: 3px;
  background: #8c8c8c;
  display: flex;
  align-items: center;
  justify-content: center;
}

.dot {
  width: 12px;
  height: 12px;
  border-radius: 50%;
  background: #7e3a42;
}

.channels {
  display: flex;
  gap: 2px;
  margin: 4px 0 0 2px;
}

.ch {
  width: 81px;
  border-radius: 5px;
  background: #484848;
  border-top: 9px solid #2b2b2b;
  border-bottom: 10px solid #2b2b2b;
  padding: 4px 2px 4px;
}

.chhead {
  height: 24px;
  margin: 0 1px 4px;
  padding: 3px 3px;
  display: flex;
  gap: 3px;
  background: #3b3b3b;
}

.chhead button {
  width: 21px;
  height: 17px;
  border: 1px solid #aaa;
  border-radius: 2px;
  background: #8e8e8e;
  display: flex;
  align-items: center;
  justify-content: center;
}

.chbody {
  border-radius: 4px 4px 0 0;
  background: #929292;
  padding: 68px 1px 4px;
}

.slots {
  display: grid;
  gap: 1px;
}

.slots button {
  height: 18px;
  border: 1px solid #4c4c4c;
  border-radius: 2px;
  background: linear-gradient(#8a8a8a, #7e7e7e);
}

.ch .sm {
  display: flex;
  justify-content: center;
  gap: 4px;
  margin: 2px 0 4px;
}

.ch .sm button {
  width: 26px;
  height: 18px;
  border: 1px solid #4c4c4c;
  border-radius: 3px;
  background: #868686;
  font: 8px "DejaVu Sans", sans-serif;
}

.fader {
  display: flex;
  height: 200px;
}

.gain, .db {
  display: grid;
  align-content: start;
  font-size: 9px;
  line-height: 12px;
}

.gain {
  width: 19px;
  grid-template-rows: 17px 17px 18px 17px 16px 14px 15px 15px 17px 19px 25px 12px;
}

.db {
  width: 28px;
  grid-template-rows: 16px 17px 24px 25px 25px 17px 15px 16px 18px 19px 12px;
}

.gain li, .db li {
  display: flex;
  justify-content: flex-end;
  gap: 2px;
}

.gain li::after, .db li::after {
  content: "";
  width: 2px;
  height: 1px;
  margin-top: 7px;
  background: #222;
}

.groove {
  flex: none;
  width: 12px;
  height: 199px;
  margin: 0 0 0 2px;
  border: 2px solid #858585;
  border-width: 2px 1px;
  background: #9f9f9f;
}

.meter {
  width: 10px;
  background: #000;
  border-top: 7px solid #2e0609;
}

.master .db {
  width: 24px;
}

.master .meter {
  width: 18px;
}

input.groove {
  appearance: none;
  writing-mode: vertical-lr;
  direction: rtl;
}

input.groove::-webkit-slider-thumb {
  appearance: none;
  width: 10px;
  height: 10px;
  border: 1px solid #222;
  background: #e4e4e4;
}

.val {
  display: flex;
  align-items: center;
  justify-content: space-between;
  height: 18px;
  margin: 4px 1px;
}

.val svg {
  width: 8px;
  height: 11px;
}

output {
  width: 61px;
  height: 16px;
  border-radius: 3px;
  background: #121212;
  color: #a5c23c;
  font: bold 13px/16px "Liberation Sans", sans-serif;
  text-align: center;
}

.chname {
  width: 100%;
  height: 18px;
  border: 1px solid #44566a;
  background: #5d7691;
  color: #0d1a2c;
}

.bin {
  left: 0;
  top: 654px;
  width: 299px;
  padding-bottom: 3px;
}

.binbox {
  display: grid;
  grid-template: 130px 19px / 1fr 18px;
  margin: 2px 3px 0 2px;
  border: 1px solid #4c4c4c;
}

.items {
  background: #acacac;
  padding-top: 15px;
}

figure {
  width: 135px;
  margin-left: 37px;
  text-align: center;
}

.thumb {
  width: 50px;
  height: 38px;
  margin: 0 auto;
  background: #000;
}

figcaption {
  background: #8f9fb2;
  color: #0d1a2c;
  font-size: 14px;
  white-space: nowrap;
}

.binbox .vscroll, .listbox .vscroll {
  border-left: 1px solid #4c4c4c;
}

.binfoot {
  display: flex;
  border-top: 1px solid #4c4c4c;
}

.binfoot > button {
  width: 29px;
  border-right: 1px solid #4c4c4c;
  display: flex;
  align-items: center;
  justify-content: center;
  background-color: #8c8c8c;
}

.binfoot > .blue {
  background-color: #5d7691;
}

.binfoot > .narrow {
  width: 20px;
}

.binbox .grip {
  border-top: 1px solid #4c4c4c;
}

/* dialog */
.dialog {
  left: 884px;
  top: 162px;
  width: 417px;
  font-size: 14px;
}

.dialog h2 {
  height: 17px;
  font-size: 13px;
  line-height: 18px;
  text-align: center;
  background: #a3a7ac;
  border-bottom: 1px solid #4a4a4a;
}

.content {
  padding: 7px 2px 0 20px;
}

.listbox {
  display: grid;
  grid-template: 150px 18px / 1fr 18px;
  width: 374px;
  margin: 9px 0 8px;
  border: 1px solid #4c4c4c;
}

.listbox ul {
  background: #b1b1b1;
}

.listbox li {
  height: 16px;
  padding-left: 18px;
  background: #8f9fb2;
  color: #0d1a2c;
}

.listbox .hscroll {
  border-top: 1px solid #4c4c4c;
  justify-content: flex-start;
  gap: 3px;
}

.listbox .hscroll .rt {
  margin-left: auto;
}

.thumbbar {
  width: 275px;
  height: 13px;
  border: 1px solid #4c4c4c;
  border-radius: 3px;
  background: #8e8e8e;
}

.corner {
  border: 1px solid #4c4c4c;
  border-width: 1px 0 0 1px;
}

.btn {
  border: 1px solid #4a4a4a;
  border-radius: 3px;
  background: linear-gradient(#8e8e8e, #7c7c7c);
  box-shadow: inset 1px 1px #9c9c9c;
}

.newbin {
  display: block;
  width: 77px;
  height: 17px;
  line-height: 14px;
  margin: 0 19px 7px auto;
}

/* the select lies over the end of its label */
.row {
  display: grid;
  grid-template-columns: 224px 150px 1fr;
  height: 22px;
}

.row label {
  grid-area: 1 / 1 / 2 / 4;
  overflow: hidden;
  white-space: nowrap;
}

.sel {
  grid-area: 1 / 2;
  position: relative;
  height: 17px;
}

.sel::after {
  content: "";
  position: absolute;
  right: 3px;
  top: 3px;
  border: 4px solid transparent;
  border-top: 5px solid #1c1c1c;
  border-bottom: 0;
}

.sel select {
  display: block;
  width: 100%;
  height: 17px;
  appearance: none;
  border: 1px solid #4a4a4a;
  border-radius: 2px;
  background: linear-gradient(#8e8e8e, #7c7c7c);
  padding: 0 10px 0 1px;
  text-align: center;
  line-height: 14px;
}

.check {
  display: flex;
  align-items: center;
  gap: 6px;
  padding-left: 4px;
  overflow: hidden;
  white-space: nowrap;
}

.check input {
  appearance: none;
  flex: none;
  width: 13px;
  height: 13px;
  border: 1px solid #4a4a4a;
  border-radius: 2px;
  background: #737373;
}

.actions {
  display: flex;
  justify-content: flex-end;
  align-items: center;
  gap: 7px;
  margin: 20px 3px 0;
  padding: 8px 8px 13px;
  border-top: 1px solid #555;
  font-weight: bold;
}

.default {
  border: 1px solid #aaa;
  border-radius: 4px;
  padding: 2px;
}

.actions .btn {
  display: block;
  width: 70px;
  height: 21px;
}
```
